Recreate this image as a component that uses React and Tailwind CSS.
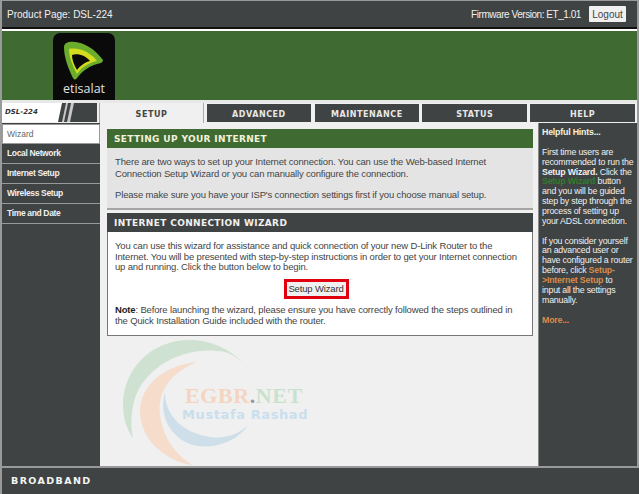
const font = { fontFamily: '"Liberation Sans", sans-serif' };
const heavy = { fontFamily: '"DejaVu Sans", sans-serif' };

function Tab({ children }) {
  return (
    <div className="w-[104.5px] h-[18px] mt-[1px] pt-[4px] bg-[#404343] flex items-center justify-center font-bold text-[8px] tracking-[0.55px] text-[#e8e8e8]" style={heavy}>
      {children}
    </div>
  );
}

function Side({ children }) {
  return (
    <div className="h-[19px] bg-[#404343] flex items-center pl-[5px] text-[8.5px] font-bold tracking-[-0.35px] text-[#f0f0f0] border-b border-[#999] box-content">
      {children}
    </div>
  );
}

function Logo() {
  return (
    <div className="ml-[51px] w-[62px] h-[67px] bg-[#0a0a0a] rounded-t-[7px] flex flex-col items-center pt-2">
      <svg width="42" height="40" viewBox="0 0 42 40" className="-ml-[2px]">
        <path d="M2 6 Q2 2 7 1 C20 -1 33 8 41 19 Q41 21 39 22 C28 24 20 30 15 37 Q13 40 11 37 C6 27 2 16 2 6 Z" fill="#6cac2c" />
        <path d="M7 8 C18 6 29 12 35 20 C26 22 20 26 15 33 C11 25 7 17 7 8 Z" fill="#d3dc1e" />
        <path d="M10 14 C16 12 24 15 28 20 C23 21 18 25 15 29 C12 24 10 19 10 14 Z" fill="#0a0a0a" />
      </svg>
      <span className="text-[12.5px] leading-[13px] mt-[1px] text-[#e0e0e0]" style={{ fontFamily: '"Open Sans", sans-serif' }}>etisalat</span>
    </div>
  );
}

function Watermark() {
  return (
    <div className="absolute left-[100px] top-[330px] w-[240px] h-[136px] pointer-events-none">
      <svg width="240" height="136" viewBox="100 330 240 136" className="absolute left-0 top-0">
        <path d="M252 373 C235 350 212 340 190 340 C150 340 123 370 123 405 C123 418 127 430 133 438 C130 425 131 410 136 395 C150 362 190 345 225 352 C235 355 245 363 252 373 Z" fill="#cfe2d2" />
        <path d="M197 362 C165 365 140 385 140 412 C140 438 165 462 193 465 C175 455 163 437 160 415 C157 390 172 372 197 362 Z" fill="#f6dccb" />
        <path d="M165 392 C160 410 165 430 185 442 C205 452 235 445 248 425 C235 438 215 441 195 433 C175 425 165 410 165 392 Z" fill="#cfdfe9" />
      </svg>
      <div className="absolute left-[85px] top-[56px] text-[22px] leading-[20px] font-bold tracking-[0.6px] whitespace-nowrap" style={{ fontFamily: '"Liberation Serif", serif' }}>
        <span className="text-[#f4d5c2]">EGBR</span>
        <span className="text-[#999]">.</span>
        <span className="text-[#c9e2cd]">NET</span>
      </div>
      <div className="absolute left-[82px] top-[77px] text-[13px] leading-[16px] font-bold text-[#c9dfee] tracking-[0.6px] whitespace-nowrap" style={heavy}>
        Mustafa Rashad
      </div>
    </div>
  );
}

export default function App() {
  return (
    <div className="relative w-[639px] h-[494px] bg-[#9a9a9a] overflow-hidden flex flex-col pl-[2px] pr-[2px] pt-[1px]" style={font}>
      <div className="h-[26px] bg-[#404343] flex items-center justify-between pl-[5px] pr-[11px] text-[10px] text-[#f0f0f0] shrink-0">
        <span>Product Page: DSL-224</span>
        <div className="flex items-center gap-[8px]">
          <span className="tracking-[-0.45px]">Firmware Version: ET_1.01</span>
          <div className="w-[37px] h-[16px] bg-[#f0f0f0] rounded-[1px] flex items-center justify-center text-[#444] text-[10px]">Logout</div>
        </div>
      </div>
      <div className="h-[2px] bg-[#111] shrink-0" />
      <div className="h-[2px] bg-white shrink-0" />
      <div className="h-[69px] bg-[#3f6b33] flex items-end shrink-0"><Logo /></div>
      <div className="h-[3px] bg-[#e8e8e8] shrink-0" />

      <div className="h-[20px] bg-[#f0f0f0] flex shrink-0">
        <div className="w-[95px] h-[19px] flex bg-[#404343] overflow-hidden">
          <div className="w-[54px] bg-white flex items-center pl-[3px] text-[7px] italic font-bold text-[#333]" style={heavy}>DSL-224</div>
          <svg width="22" height="19" viewBox="0 0 22 19">
            <polygon points="0,0 6,0 2,19 0,19" fill="#ffffff" />
            <polygon points="10,0 12,0 8,19 6,19" fill="#c8c8c8" />
            <polygon points="15,0 18,0 14,19 11,19" fill="#c8c8c8" />
          </svg>
        </div>
        <div className="ml-[2px] w-[105px] h-[20px] pt-[3px] bg-[#f0f0f0] border-x border-[#aaa] flex items-center justify-center font-bold text-[8px] tracking-[0.55px] text-[#444]" style={heavy}>SETUP</div>
        <div className="flex gap-[3.4px] ml-[2.7px]">
          <Tab>ADVANCED</Tab>
          <Tab>MAINTENANCE</Tab>
          <Tab>STATUS</Tab>
          <Tab>HELP</Tab>
        </div>
      </div>

      <div className="flex-1 flex min-h-0 bg-[#f0f0f0]">
        <div className="w-[98px] bg-[#404343] flex flex-col shrink-0">
          <div className="h-[20px] bg-white border border-[#999] flex items-center pl-[4px] text-[8.5px] text-[#666] mt-[1px]">Wizard</div>
          <Side>Local Network</Side>
          <Side>Internet Setup</Side>
          <Side>Wireless Setup</Side>
          <Side>Time and Date</Side>
        </div>
        <div className="flex-1 pl-[7px] pr-[5px] pt-[6px] flex flex-col">
          <div className="border-b-2 border-[#a5a5a5]">
            <div className="h-[19px] pt-[2px] bg-[#3f6b33] pl-[7px] flex items-center font-bold text-[9px] tracking-[0.35px] text-[#f2f2dc]" style={heavy}>SETTING UP YOUR INTERNET</div>
            <div className="h-[60px] bg-[#e4e4e4] pl-[8px] pt-[8px] text-[9.5px] tracking-[-0.16px] leading-[12px] text-[#444]">
              <p>There are two ways to set up your Internet connection. You can use the Web-based Internet<br />Connection Setup Wizard or you can manually configure the connection.</p>
              <p className="mt-[9px]">Please make sure you have your ISP's connection settings first if you choose manual setup.</p>
            </div>
          </div>
          <div className="mt-[3px] border border-t-0 border-[#777]">
            <div className="h-[19px] pt-[2px] bg-[#404343] pl-[7px] flex items-center font-bold text-[9px] tracking-[0.35px] text-[#f0f0f0] -mx-px" style={heavy}>INTERNET CONNECTION WIZARD</div>
            <div className="h-[103px] bg-white pl-[7px] pr-[2px] pt-[9px] text-[9.5px] tracking-[-0.16px] leading-[10.7px] text-[#444]">
              <p>You can use this wizard for assistance and quick connection of your new D-Link Router to the<br />Internet. You will be presented with step-by-step instructions in order to get your Internet connection<br />up and running. Click the button below to begin.</p>
              <div className="flex justify-center mt-[6px] mb-[6px] pr-[13px]">
                <div className="w-[65px] h-[20px] border-[3px] border-[#e00010] bg-[#f0f0f0] flex items-center justify-center text-[#333] text-[9.5px] whitespace-nowrap">Setup Wizard</div>
              </div>
              <p><b className="text-[#222]">Note</b>: Before launching the wizard, please ensure you have correctly followed the steps outlined in<br />the Quick Installation Guide included with the router.</p>
            </div>
          </div>
        </div>
        <div className="w-[99px] bg-[#404343] pl-[3px] pt-[4px] text-[8.8px] tracking-[-0.2px] leading-[9.85px] text-[#f0f0f0] shrink-0 border-l border-[#888] whitespace-nowrap">
          <p className="font-bold text-[#f2f2dc] mb-[10px] mt-[1px]">Helpful Hints...</p>
          <p>First time users are<br />recommended to run the<br /><b>Setup Wizard.</b> Click the<br /><b className="text-[#2f7d2f]">Setup Wizard</b> button<br />and you will be guided<br />step by step through the<br />process of setting up<br />your ADSL connection.</p>
          <p className="mt-[10px]">If you consider yourself<br />an advanced user or<br />have configured a router<br />before, click <b className="text-[#d98c4a]">Setup-</b><br /><b className="text-[#d98c4a]">&gt;Internet Setup</b> to<br />input all the settings<br />manually.</p>
          <p className="mt-[10px] font-bold text-[#d98c4a]">More...</p>
        </div>
      </div>

      <div className="h-[28px] bg-[#404343] border-t-2 border-[#999] flex items-center pl-[9px] text-[9.5px] font-bold tracking-[1.4px] text-[#f5f5f5] shrink-0 -mr-[2px]" style={heavy}>BROADBAND</div>
      <Watermark />
    </div>
  );
}
